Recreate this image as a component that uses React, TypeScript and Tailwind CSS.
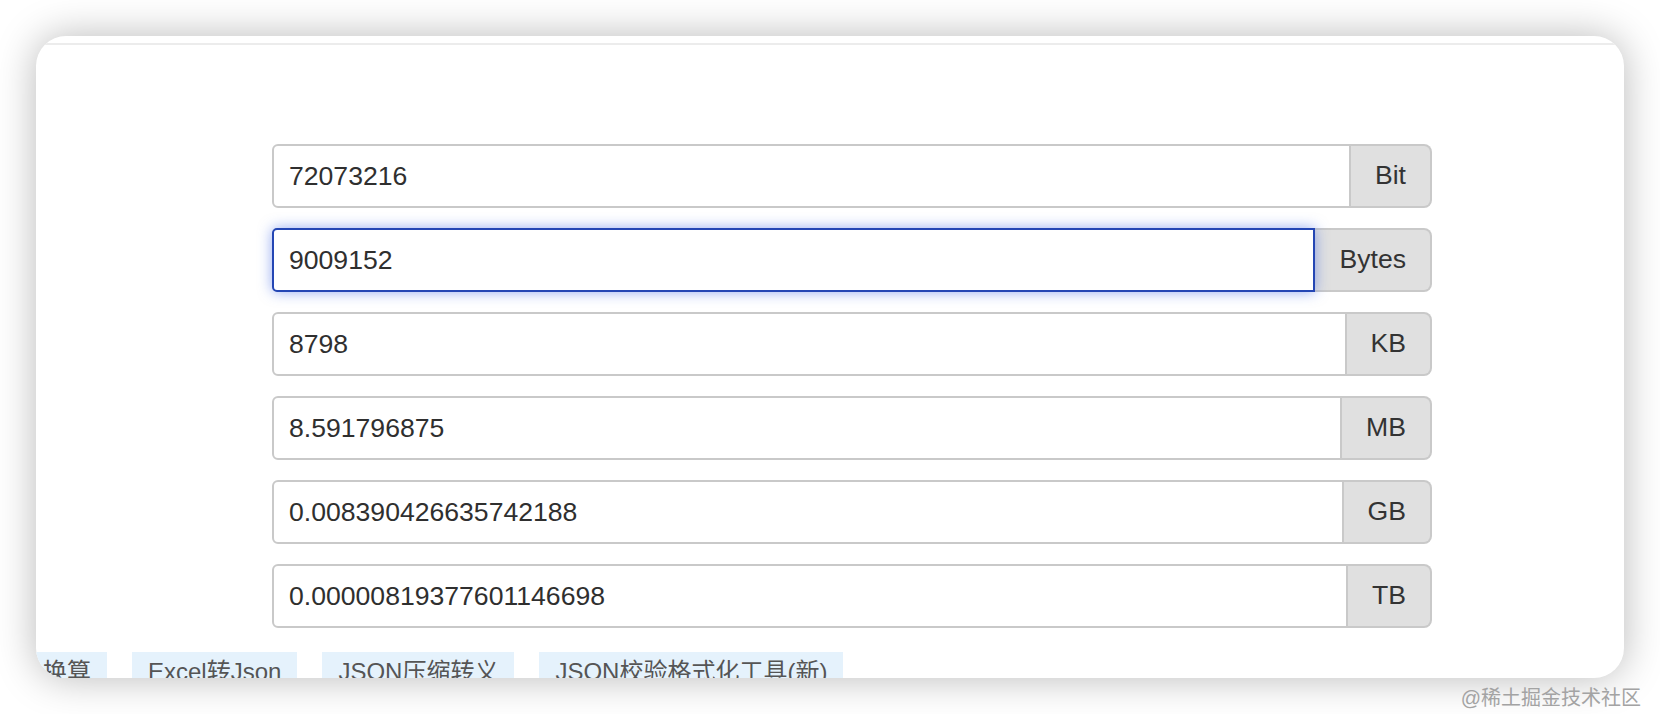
const rows = [
  { value: "72073216", unit: "Bit" },
  { value: "9009152", unit: "Bytes", focused: true },
  { value: "8798", unit: "KB" },
  { value: "8.591796875", unit: "MB" },
  { value: "0.008390426635742188", unit: "GB" },
  { value: "0.00000819377601146698", unit: "TB" },
];

const tags = ["换算", "Excel转Json", "JSON压缩转义", "JSON校验格式化工具(新)"];

const font = { fontFamily: '"Liberation Sans", "Noto Sans CJK SC", sans-serif' };

const UnitRow = ({ value, unit, focused }: { value: string; unit: string; focused?: boolean }) => (
  <div className="flex h-[64px] w-full">
    <input
      readOnly
      value={value}
      className={
        focused
          ? "relative z-10 h-full min-w-0 flex-1 rounded-l-[5px] border-2 border-[#2446b4] bg-white pl-[15px] text-[26.6px] text-[#2f2f2f] shadow-[0_0_14px_rgba(60,100,230,0.55)] outline-none"
          : "h-full min-w-0 flex-1 rounded-l-[6px] border-2 border-[#c9c9c9] bg-white pl-[15px] text-[26.6px] text-[#2f2f2f] outline-none"
      }
      style={font}
    />
    <div className="flex h-full items-center rounded-r-[8px] border-2 border-l-0 border-[#c9c9c9] bg-[#e0e0e0] px-[24px] text-[26.6px] text-[#333]">
      {unit}
    </div>
  </div>
);

export default function App() {
  return (
    <div className="relative h-[714px] w-full overflow-hidden bg-white" style={font}>
      <div className="pl-[36px] pt-[36px]">
        <div className="h-[642px] w-[1588px] overflow-hidden rounded-[30px] bg-white shadow-[0_0_40px_rgba(0,0,0,0.28)]">
          <div className="mt-[7px] h-[2px] w-full bg-[#ececec]" />
          <div className="ml-[236px] mt-[99px] flex w-[1160px] flex-col gap-[20px]">
            {rows.map((r) => (
              <UnitRow key={r.unit} {...r} />
            ))}
          </div>
          <div className="-ml-[9px] mt-[24px] flex gap-[25px]">
            {tags.map((t) => (
              <div
                key={t}
                className="h-[44px] whitespace-nowrap bg-[#e5f2fc] px-[16px] py-[2px] text-[24px] leading-[36px] text-[#555]"
              >
                {t}
              </div>
            ))}
          </div>
        </div>
      </div>
      <div className="absolute bottom-[1px] right-[19px] text-[20px] text-[#a3a3a3]">@稀土掘金技术社区</div>
    </div>
  );
}
